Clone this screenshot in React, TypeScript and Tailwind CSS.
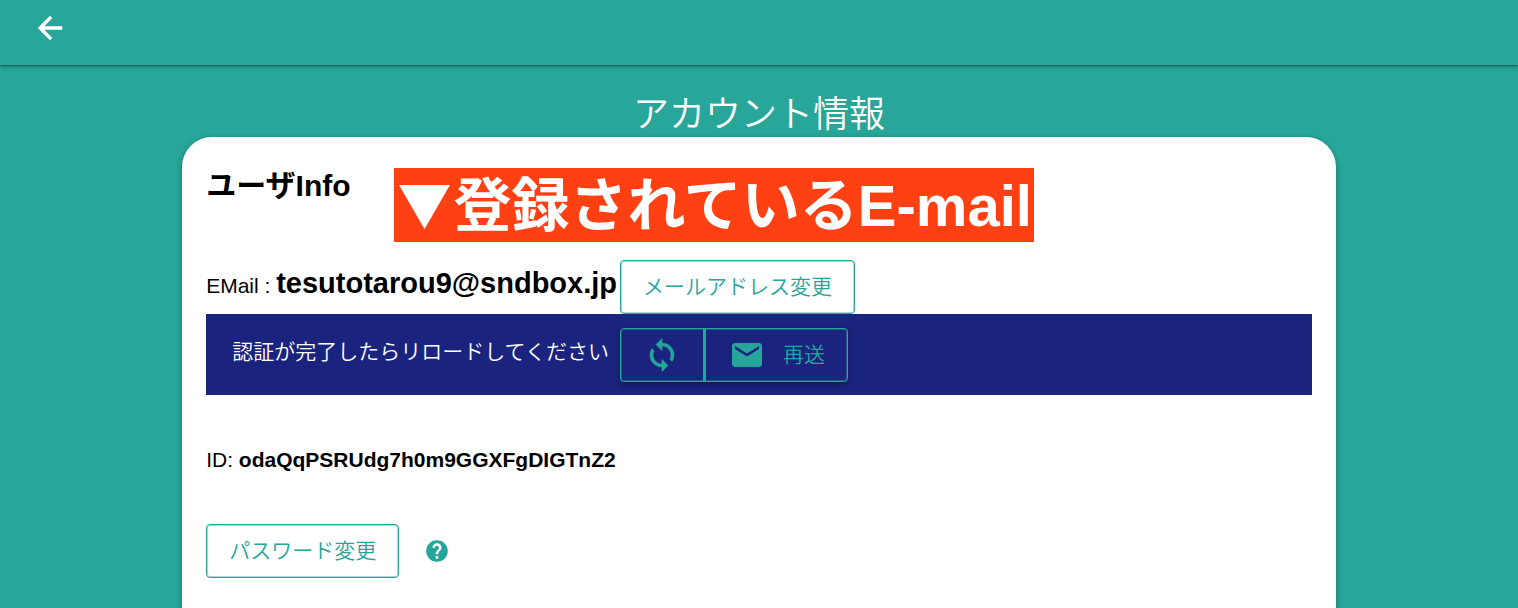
import type { ReactNode } from "react";

const iconPaths = {
  back: "M20 11H7.83l5.59-5.59L12 4l-8 8 8 8 1.41-1.41L7.83 13H20v-2z",
  sync: "M12 4V1L8 5l4 4V6c3.31 0 6 2.69 6 6 0 1.01-.25 1.97-.7 2.8l1.46 1.46A7.93 7.93 0 0 0 20 12c0-4.42-3.58-8-8-8zm0 14c-3.31 0-6-2.69-6-6 0-1.01.25-1.97.7-2.8L5.24 7.74A7.93 7.93 0 0 0 4 12c0 4.42 3.58 8 8 8v3l4-4-4-4v3z",
  mail: "M20 4H4c-1.1 0-2 .9-2 2v12c0 1.1.9 2 2 2h16c1.1 0 2-.9 2-2V6c0-1.1-.9-2-2-2zm0 4l-8 5-8-5V6l8 5 8-5v2z",
  help: "M12 2C6.48 2 2 6.48 2 12s4.48 10 10 10 10-4.48 10-10S17.52 2 12 2zm1.2 17.1h-2.4v-2.4h2.4v2.4zm2-7.75l-.9.92C13.5 12.9 13.2 13.5 13.2 15h-2.4v-.5c0-1.1.45-2.1 1.17-2.83l1.24-1.26c.37-.36.59-.86.59-1.41 0-1-.8-1.8-1.8-1.8s-1.8.8-1.8 1.8H7.8c0-2.21 1.99-4.2 4.2-4.2s4.2 1.89 4.2 4.2c0 .88-.36 1.78-1 2.35z",
};

function Icon({ name, className }: { name: keyof typeof iconPaths; className: string }) {
  return (
    <svg viewBox="0 0 24 24" fill="currentColor" aria-hidden="true" className={className}>
      <path d={iconPaths[name]} />
    </svg>
  );
}

function OutlineButton({ children }: { children: ReactNode }) {
  return (
    <button
      type="button"
      className="h-[54px] shrink-0 rounded border border-[#26a69a] bg-white px-[22px] font-[350] text-[#26a69a] ring-1 ring-[#26a69a]/40 ring-inset"
    >
      {children}
    </button>
  );
}

export default function App() {
  return (
    <div className="min-h-screen bg-[#28a69a] font-['Liberation_Sans','Noto_Sans_CJK_JP',sans-serif] text-[21px] text-black">
      <header className="flex h-[65px] items-start px-8 pt-2.5 shadow-[0_1px_2px_rgba(0,0,0,0.4),0_2px_6px_rgba(0,0,0,0.15)]">
        <button type="button" aria-label="戻る" className="text-white">
          <Icon name="back" className="size-9 stroke-current stroke-[0.4]" />
        </button>
      </header>

      <main className="mx-auto w-[76%] pt-7">
        <h1 className="text-center text-4xl leading-[44px] font-[350] text-white">アカウント情報</h1>

        <section className="min-h-[480px] rounded-t-[30px] bg-white px-6 pt-[31px] shadow-[0_2px_6px_rgba(0,0,0,0.3)]">
          <div className="flex items-start gap-[43px]">
            <h2 className="text-3xl leading-9 font-bold">ユーザInfo</h2>
            <p className="bg-[#ff4013] px-0.5 pt-0.5 text-[58px] leading-[72px] font-bold text-white">
              <span className="px-0.5 font-['Noto_Sans_CJK_JP'] text-[54px] leading-none">▼</span>登録されているE-mail
            </p>
          </div>

          <div className="mt-[18px] flex items-center">
            <p className="mr-[3px] pb-1.5 leading-9 whitespace-pre">
              EMail : <strong className="text-[29px]">tesutotarou9@sndbox.jp</strong>
            </p>
            <OutlineButton>メールアドレス変更</OutlineButton>
          </div>

          <div className="flex h-[81px] items-center bg-[#1a237e] pl-[26px]">
            <p className="mr-[11px] pb-1.5 font-[350] text-white">認証が完了したらリロードしてください</p>
            <div className="flex h-[54px] rounded border border-[#26a69a] text-[#26a69a] shadow-[0_3px_6px_rgba(0,0,0,0.35)] ring-1 ring-[#26a69a]/40 ring-inset">
              <button type="button" aria-label="リロード" className="flex w-[85px] items-center justify-center border-r-[3px] border-[#26a69a]">
                <Icon name="sync" className="size-9 stroke-current stroke-[0.4]" />
              </button>
              <button type="button" className="flex items-center gap-[18px] pr-[22px] pl-[23px] font-[350]">
                <Icon name="mail" className="size-9" />
                再送
              </button>
            </div>
          </div>

          <p className="mt-[47px] leading-9">
            ID: <strong>odaQqPSRUdg7h0m9GGXFgDIGTnZ2</strong>
          </p>

          <div className="mt-[46px] flex items-center gap-[25px]">
            <OutlineButton>パスワード変更</OutlineButton>
            <button type="button" aria-label="ヘルプ" className="text-[#26a69a]">
              <Icon name="help" className="size-[26px]" />
            </button>
          </div>
        </section>
      </main>
    </div>
  );
}
